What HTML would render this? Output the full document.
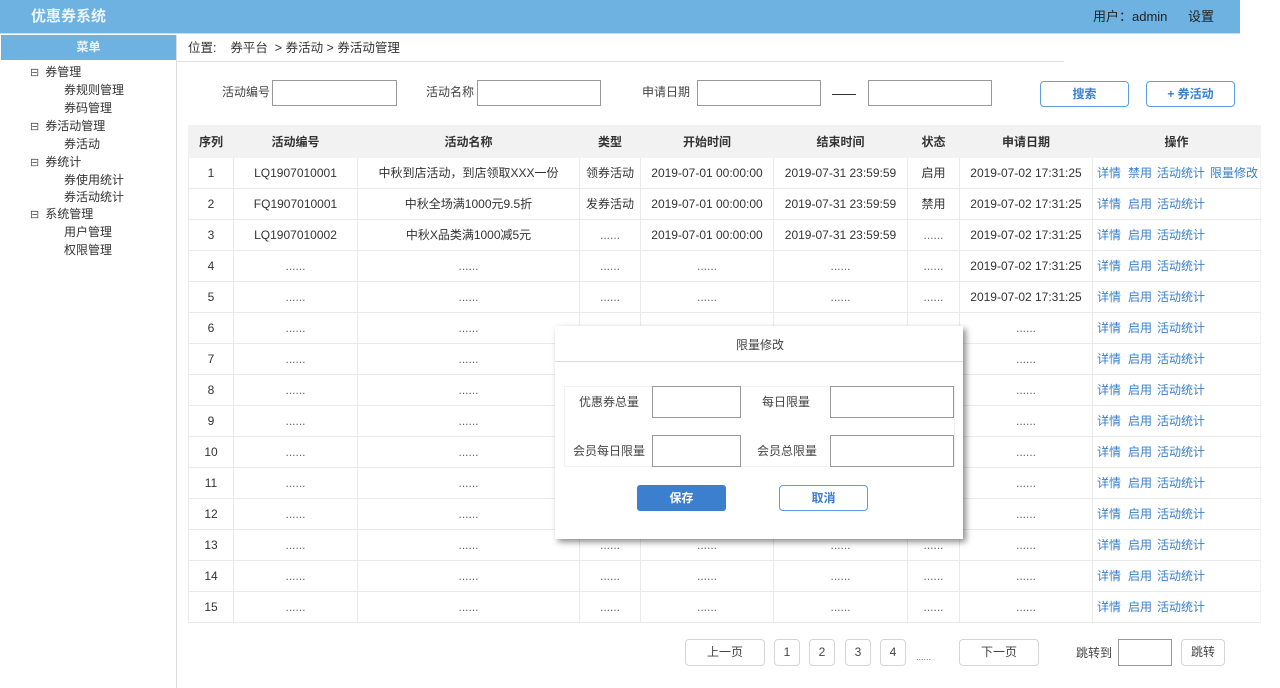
<!DOCTYPE html>
<html><head><meta charset="utf-8">
<style>
*{margin:0;padding:0;box-sizing:border-box}
body{width:1280px;height:688px;background:#fff;font-family:"Liberation Sans","Noto Sans CJK SC",sans-serif;font-size:12px;color:#333;position:relative;overflow:hidden;line-height:1.2}
.abs{position:absolute}
.hdr{left:0;top:0;width:1240px;height:34px;background:#6db2e0;border-bottom:1px solid #c9dff0}
.logo{left:31px;top:8px;color:#eaf4fb;font-size:15px;font-weight:bold}
.user{left:1093px;top:9px;font-size:13px;color:#222}
.set{left:1188px;top:9px;font-size:13px;color:#222}
.side{left:0;top:35px;width:177px;height:653px;border-right:1px solid #ddd}
.menu{left:1px;top:35px;width:175px;height:25px;background:#6db2e0;color:#eaf4fb;text-align:center;line-height:25px;font-weight:bold;font-size:12px}
.tree div{position:absolute;font-size:12px;color:#333;white-space:nowrap}
.tree .g{left:30px}
.tree .g:before{content:"⊟";font-size:11px;margin-right:6px;color:#555}
.tree .c{left:64px}
.crumb{left:188px;top:41px;font-size:12.5px}
.cline{left:176px;top:61px;width:888px;height:1px;background:#e3e3e3}
.lbl{font-size:12px;color:#444}
.inp{border:1px solid #999;background:#fff;height:26px}
.btn{border:1px solid #5a9ee0;border-radius:4px;color:#3a7fcf;text-align:center;line-height:24px;font-weight:bold;background:#fff}
table.t{position:absolute;left:188px;top:125px;border-collapse:collapse;table-layout:fixed;width:1072px}
.t td,.t th{height:31px;border:1px solid #eaeaea;text-align:center;font-size:12px;white-space:nowrap;overflow:hidden;line-height:1}
.t th{background:#f2f2f2;font-weight:bold;height:32px;border-color:#f2f2f2}
.t td.op{text-align:left;padding-left:4px;color:#3a80cc;border-right-color:#f2f2f2}
.t td.op span{margin-right:5px}
.t td.op span.w{margin-right:7px}
.dots{font-size:9px;color:#666}
.modal{left:555px;top:326px;width:408px;height:213px;background:#fff;box-shadow:3px 3px 6px rgba(0,0,0,.45)}
.pg{border:1px solid #d5d5d5;border-radius:4px;text-align:center;line-height:25px;height:27px;color:#444;background:#fff}
</style></head><body>
<div class="abs hdr"></div>
<div class="abs logo">优惠券系统</div>
<div class="abs user">用户：admin</div>
<div class="abs set">设置</div>
<div class="abs side"></div>
<div class="abs menu">菜单</div>
<div class="tree">
<div class="g" style="top:65px">券管理</div>
<div class="c" style="top:83px">券规则管理</div>
<div class="c" style="top:101px">券码管理</div>
<div class="g" style="top:119px">券活动管理</div>
<div class="c" style="top:137px">券活动</div>
<div class="g" style="top:155px">券统计</div>
<div class="c" style="top:173px">券使用统计</div>
<div class="c" style="top:190px">券活动统计</div>
<div class="g" style="top:207px">系统管理</div>
<div class="c" style="top:225px">用户管理</div>
<div class="c" style="top:243px">权限管理</div>
</div>
<div class="abs crumb">位置:&nbsp;&nbsp;&nbsp; 券平台&nbsp; &gt; 券活动 &gt; 券活动管理</div>
<div class="abs cline"></div>

<div class="abs lbl" style="left:222px;top:85px">活动编号</div>
<div class="abs inp" style="left:272px;top:80px;width:125px"></div>
<div class="abs lbl" style="left:426px;top:85px">活动名称</div>
<div class="abs inp" style="left:477px;top:80px;width:124px"></div>
<div class="abs lbl" style="left:642px;top:85px">申请日期</div>
<div class="abs inp" style="left:697px;top:80px;width:124px"></div>
<div class="abs" style="left:832px;top:94px;width:24px;height:1px;background:#333"></div>
<div class="abs inp" style="left:868px;top:80px;width:124px"></div>
<div class="abs btn" style="left:1040px;top:81px;width:89px;height:26px">搜索</div>
<div class="abs btn" style="left:1146px;top:81px;width:89px;height:26px">+ 券活动</div>

<table class="t">
<colgroup><col style="width:45px"><col style="width:124px"><col style="width:222px"><col style="width:61px"><col style="width:133px"><col style="width:134px"><col style="width:52px"><col style="width:133px"><col style="width:168px"></colgroup>
<tr><th>序列</th><th>活动编号</th><th>活动名称</th><th>类型</th><th>开始时间</th><th>结束时间</th><th>状态</th><th>申请日期</th><th>操作</th></tr>
<tr><td>1</td><td>LQ1907010001</td><td>中秋到店活动，到店领取XXX一份</td><td>领券活动</td><td>2019-07-01 00:00:00</td><td>2019-07-31 23:59:59</td><td>启用</td><td>2019-07-02 17:31:25</td><td class="op"><span class="w">详情</span><span>禁用</span><span>活动统计</span><span>限量修改</span></td></tr>
<tr><td>2</td><td>FQ1907010001</td><td>中秋全场满1000元9.5折</td><td>发券活动</td><td>2019-07-01 00:00:00</td><td>2019-07-31 23:59:59</td><td>禁用</td><td>2019-07-02 17:31:25</td><td class="op"><span class="w">详情</span><span>启用</span><span>活动统计</span></td></tr>
<tr><td>3</td><td>LQ1907010002</td><td>中秋X品类满1000减5元</td><td class="dots">......</td><td>2019-07-01 00:00:00</td><td>2019-07-31 23:59:59</td><td class="dots">......</td><td>2019-07-02 17:31:25</td><td class="op"><span class="w">详情</span><span>启用</span><span>活动统计</span></td></tr>
<tr><td>4</td><td class="dots">......</td><td class="dots">......</td><td class="dots">......</td><td class="dots">......</td><td class="dots">......</td><td class="dots">......</td><td>2019-07-02 17:31:25</td><td class="op"><span class="w">详情</span><span>启用</span><span>活动统计</span></td></tr>
<tr><td>5</td><td class="dots">......</td><td class="dots">......</td><td class="dots">......</td><td class="dots">......</td><td class="dots">......</td><td class="dots">......</td><td>2019-07-02 17:31:25</td><td class="op"><span class="w">详情</span><span>启用</span><span>活动统计</span></td></tr>
<tr><td>6</td><td class="dots">......</td><td class="dots">......</td><td class="dots">......</td><td class="dots">......</td><td class="dots">......</td><td class="dots">......</td><td class="dots">......</td><td class="op"><span class="w">详情</span><span>启用</span><span>活动统计</span></td></tr>
<tr><td>7</td><td class="dots">......</td><td class="dots">......</td><td class="dots">......</td><td class="dots">......</td><td class="dots">......</td><td class="dots">......</td><td class="dots">......</td><td class="op"><span class="w">详情</span><span>启用</span><span>活动统计</span></td></tr>
<tr><td>8</td><td class="dots">......</td><td class="dots">......</td><td class="dots">......</td><td class="dots">......</td><td class="dots">......</td><td class="dots">......</td><td class="dots">......</td><td class="op"><span class="w">详情</span><span>启用</span><span>活动统计</span></td></tr>
<tr><td>9</td><td class="dots">......</td><td class="dots">......</td><td class="dots">......</td><td class="dots">......</td><td class="dots">......</td><td class="dots">......</td><td class="dots">......</td><td class="op"><span class="w">详情</span><span>启用</span><span>活动统计</span></td></tr>
<tr><td>10</td><td class="dots">......</td><td class="dots">......</td><td class="dots">......</td><td class="dots">......</td><td class="dots">......</td><td class="dots">......</td><td class="dots">......</td><td class="op"><span class="w">详情</span><span>启用</span><span>活动统计</span></td></tr>
<tr><td>11</td><td class="dots">......</td><td class="dots">......</td><td class="dots">......</td><td class="dots">......</td><td class="dots">......</td><td class="dots">......</td><td class="dots">......</td><td class="op"><span class="w">详情</span><span>启用</span><span>活动统计</span></td></tr>
<tr><td>12</td><td class="dots">......</td><td class="dots">......</td><td class="dots">......</td><td class="dots">......</td><td class="dots">......</td><td class="dots">......</td><td class="dots">......</td><td class="op"><span class="w">详情</span><span>启用</span><span>活动统计</span></td></tr>
<tr><td>13</td><td class="dots">......</td><td class="dots">......</td><td class="dots">......</td><td class="dots">......</td><td class="dots">......</td><td class="dots">......</td><td class="dots">......</td><td class="op"><span class="w">详情</span><span>启用</span><span>活动统计</span></td></tr>
<tr><td>14</td><td class="dots">......</td><td class="dots">......</td><td class="dots">......</td><td class="dots">......</td><td class="dots">......</td><td class="dots">......</td><td class="dots">......</td><td class="op"><span class="w">详情</span><span>启用</span><span>活动统计</span></td></tr>
<tr><td>15</td><td class="dots">......</td><td class="dots">......</td><td class="dots">......</td><td class="dots">......</td><td class="dots">......</td><td class="dots">......</td><td class="dots">......</td><td class="op"><span class="w">详情</span><span>启用</span><span>活动统计</span></td></tr>
</table>

<div class="abs modal"></div>
<div class="abs" style="left:736px;top:338px;font-size:12px;color:#444">限量修改</div>
<div class="abs" style="left:555px;top:361px;width:408px;height:1px;background:#ddd"></div>
<div class="abs" style="left:564px;top:386px;width:391px;height:81px;border:1px solid #f0f0f0"></div>
<div class="abs lbl" style="left:579px;top:395px">优惠券总量</div>
<div class="abs inp" style="left:652px;top:386px;width:89px;height:32px"></div>
<div class="abs lbl" style="left:762px;top:395px">每日限量</div>
<div class="abs inp" style="left:830px;top:386px;width:124px;height:32px"></div>
<div class="abs lbl" style="left:573px;top:444px">会员每日限量</div>
<div class="abs inp" style="left:652px;top:435px;width:89px;height:32px"></div>
<div class="abs lbl" style="left:757px;top:444px">会员总限量</div>
<div class="abs inp" style="left:830px;top:435px;width:124px;height:32px"></div>
<div class="abs" style="left:637px;top:485px;width:89px;height:26px;background:#3a80cf;border-radius:3px;color:#fff;text-align:center;line-height:26px;font-weight:bold">保存</div>
<div class="abs btn" style="left:779px;top:485px;width:89px;height:26px">取消</div>

<div class="abs pg" style="left:685px;top:639px;width:80px">上一页</div>
<div class="abs pg" style="left:774px;top:639px;width:26px">1</div>
<div class="abs pg" style="left:809px;top:639px;width:26px">2</div>
<div class="abs pg" style="left:845px;top:639px;width:26px">3</div>
<div class="abs pg" style="left:880px;top:639px;width:26px">4</div>
<div class="abs dots" style="left:916px;top:652px">......</div>
<div class="abs pg" style="left:959px;top:639px;width:80px">下一页</div>
<div class="abs lbl" style="left:1076px;top:646px">跳转到</div>
<div class="abs inp" style="left:1118px;top:639px;width:54px;height:27px"></div>
<div class="abs pg" style="left:1181px;top:639px;width:44px">跳转</div>
</body></html>
